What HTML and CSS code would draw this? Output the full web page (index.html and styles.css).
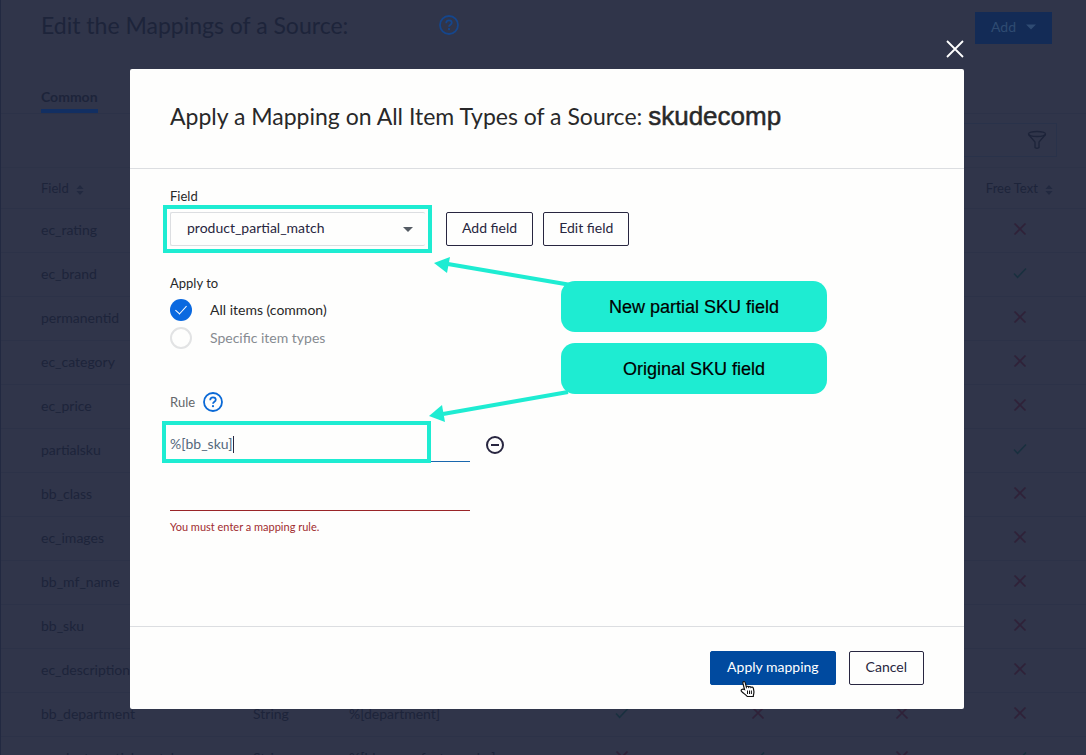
FILE: index.html
```html
<!DOCTYPE html>
<html lang="en">
<head>
<meta charset="utf-8">
<title>Edit the Mappings of a Source</title>
<link rel="stylesheet" href="styles.css">
</head>
<body>
<svg class="defs" aria-hidden="true">
  <symbol id="cross" viewBox="0 0 14 14"><path d="M1.500 1.500l11 11M12.500 1.500l-11 11" fill="none" stroke="currentColor" stroke-width="1.700"/></symbol>
  <symbol id="check" viewBox="0 0 14 14"><path d="M1 7.500l3.600 3.800L13 2.500" fill="none" stroke="currentColor" stroke-width="1.500"/></symbol>
  <symbol id="sort" viewBox="0 0 8 12"><path d="M4 1l3.500 4h-7zM4 11l3.500-4h-7z" fill="currentColor"/></symbol>
  <symbol id="help" viewBox="0 0 20 20"><circle cx="10" cy="10" r="9" fill="none" stroke="currentColor" stroke-width="1.800"/><path d="M7.200 8.200C7.200 6.300 8.400 5.300 10 5.300s2.800 1 2.800 2.500C12.800 9.800 10 9.800 10 11.800" fill="none" stroke="currentColor" stroke-width="1.700"/><circle cx="10" cy="14.200" r="1.100" fill="currentColor"/></symbol>
</svg>

<div class="page">
  <header class="page-header">
    <h1 class="page-title">Edit the Mappings of a Source:</h1>
    <button class="help page-help" type="button" aria-label="Help"><svg><use href="#help"/></svg></button>
    <button class="add" type="button">Add <svg viewBox="0 0 10 6"><path d="M0 .5h10L5 5.500z" fill="currentColor"/></svg></button>
  </header>
  <nav class="tabs"><a class="tab" href="#common">Common</a></nav>
  <div class="toolbar">
    <button class="filter" type="button" aria-label="Filter"><svg viewBox="0 0 20 20" fill="none" stroke="currentColor" stroke-width="1.300"><ellipse cx="10" cy="4" rx="8.500" ry="2.500"/><path d="M1.500 4.500L8 12v5.500q2 1.500 4 0V12l6.500-7.500"/></svg></button>
  </div>
  <table class="mappings">
    <colgroup><col class="c-field"><col class="c-type"><col class="c-rule"><col class="c-a"><col class="c-b"><col class="c-c"><col class="c-d"></colgroup>
    <thead><tr><th>Field <svg class="sort"><use href="#sort"/></svg></th><th></th><th></th><th></th><th></th><th></th><th class="mark-head">Free Text <svg class="sort"><use href="#sort"/></svg></th></tr></thead>
    <tbody>
      <tr><td>ec_rating</td><td></td><td></td><td></td><td></td><td></td><td class="mark"><svg class="no"><use href="#cross"/></svg></td></tr>
      <tr><td>ec_brand</td><td></td><td></td><td></td><td></td><td></td><td class="mark"><svg class="yes"><use href="#check"/></svg></td></tr>
      <tr><td>permanentid</td><td></td><td></td><td></td><td></td><td></td><td class="mark"><svg class="no"><use href="#cross"/></svg></td></tr>
      <tr><td>ec_category</td><td></td><td></td><td></td><td></td><td></td><td class="mark"><svg class="no"><use href="#cross"/></svg></td></tr>
      <tr><td>ec_price</td><td></td><td></td><td></td><td></td><td></td><td class="mark"><svg class="no"><use href="#cross"/></svg></td></tr>
      <tr><td>partialsku</td><td></td><td></td><td></td><td></td><td></td><td class="mark"><svg class="yes"><use href="#check"/></svg></td></tr>
      <tr><td>bb_class</td><td></td><td></td><td></td><td></td><td></td><td class="mark"><svg class="no"><use href="#cross"/></svg></td></tr>
      <tr><td>ec_images</td><td></td><td></td><td></td><td></td><td></td><td class="mark"><svg class="no"><use href="#cross"/></svg></td></tr>
      <tr><td>bb_mf_name</td><td></td><td></td><td></td><td></td><td></td><td class="mark"><svg class="no"><use href="#cross"/></svg></td></tr>
      <tr><td>bb_sku</td><td></td><td></td><td></td><td></td><td></td><td class="mark"><svg class="no"><use href="#cross"/></svg></td></tr>
      <tr><td>ec_description</td><td></td><td></td><td></td><td></td><td></td><td class="mark"><svg class="no"><use href="#cross"/></svg></td></tr>
      <tr><td>bb_department</td><td>String</td><td>%[department]</td><td class="mark"><svg class="yes"><use href="#check"/></svg></td><td class="mark"><svg class="no"><use href="#cross"/></svg></td><td class="mark mark-wide"><svg class="no"><use href="#cross"/></svg></td><td class="mark"><svg class="no"><use href="#cross"/></svg></td></tr>
      <tr><td>product_partial_match</td><td>String</td><td>%[bb_manufacture_sku]</td><td class="mark"><svg class="no"><use href="#cross"/></svg></td><td class="mark"><svg class="yes"><use href="#check"/></svg></td><td class="mark mark-wide"><svg class="no"><use href="#cross"/></svg></td><td class="mark"><svg class="yes"><use href="#check"/></svg></td></tr>
    </tbody>
  </table>
</div>

<div class="overlay">
  <div class="dialog" role="dialog" aria-labelledby="dialog-title">
    <button class="close" type="button" aria-label="Close"><svg viewBox="0 0 18 18"><path d="M1 1l16 16M17 1L1 17" stroke="currentColor" stroke-width="1.800" fill="none"/></svg></button>
    <header class="dialog-header">
      <h2 class="dialog-title" id="dialog-title">Apply a Mapping on All Item Types of a Source: <span class="source">skudecomp</span></h2>
    </header>
    <form class="dialog-body">
      <label class="label" for="field">Field</label>
      <div class="field-row">
        <div class="marked marked-select">
          <select class="select" id="field"><option>product_partial_match</option></select>
          <svg class="arrow arrow-top" viewBox="0 0 140 32"><path d="M137 29L14 8" stroke="currentColor" stroke-width="4"/><path d="M0 7L16 1l-3 16z" fill="currentColor"/></svg>
        </div>
        <button class="button" type="button">Add field</button>
        <button class="button" type="button">Edit field</button>
      </div>
      <fieldset class="apply-to">
        <legend class="label">Apply to</legend>
        <label class="option"><input class="radio" type="radio" name="scope" checked>All items (common)</label>
        <label class="option muted"><input class="radio" type="radio" name="scope">Specific item types</label>
      </fieldset>
      <div class="rule-head"><label class="rule-label" for="rule">Rule</label><button class="help" type="button" aria-label="Rule help"><svg><use href="#help"/></svg></button></div>
      <div class="rule-row">
        <div class="rule-box">
          <input class="rule" id="rule" type="text" value="%[bb_sku]">
          <span class="rule-mark"></span>
          <span class="caret"></span>
          <svg class="arrow arrow-bottom" viewBox="0 0 140 32"><path d="M139 2L14 24" stroke="currentColor" stroke-width="4"/><path d="M0 26L13 15l3 17z" fill="currentColor"/></svg>
        </div>
        <button class="remove" type="button" aria-label="Remove rule"><svg viewBox="0 0 20 20" fill="none" stroke="currentColor" stroke-width="2"><circle cx="10" cy="10" r="8"/><path d="M6 10h8"/></svg></button>
      </div>
      <input class="rule invalid" type="text" aria-label="Mapping rule" aria-describedby="rule-error">
      <p class="error" id="rule-error">You must enter a mapping rule.</p>
      <div class="notes">
        <p class="note">New partial SKU field</p>
        <p class="note">Original SKU field</p>
      </div>
    </form>
    <footer class="dialog-footer">
      <button class="button primary" type="button">Apply mapping
        <svg class="cursor" viewBox="0 0 16 18"><path d="M4.500 9.500L2.900 3.200c-.4-1.900 1.800-2.300 2.300-.6L6.400 7c.4-1 2-1 2.300.1.600-.9 2-.7 2.300.3.700-.6 2.200-.3 2.400 1l.5 3c.3 2-.6 3-.6 5.100H7.300C6 14.700 3.500 13.500 1.500 11.400.3 9.800 2.500 8.300 4.500 9.500z" fill="#fff" stroke="#111" stroke-width="1.200"/><path d="M7.500 10.500v3.500M9.500 10.500v3.500M11.400 10.500v3.500" stroke="#111"/></svg>
      </button>
      <button class="button" type="button">Cancel</button>
    </footer>
  </div>
</div>
</body>
</html>
```
FILE: styles.css
```css
* { box-sizing: border-box; }
body {
  margin: 0;
  height: 100vh;
  overflow: hidden;
  background: #30354a;
  color: #1d243a;
  font: 14px/20px Lato, "Noto Sans", sans-serif;
}
button, input, select { font: inherit; color: inherit; }
button { border: 0; padding: 0; background: none; }
svg { display: block; }
h1, h2, p { margin: 0; font-weight: 400; }
.defs { position: absolute; width: 0; height: 0; }

.page { border-left: 1px solid #222941; }
.page-header { display: flex; align-items: center; height: 56px; padding: 0 34px 0 40px; }
.page-title { font-size: 23px; line-height: 32px; padding-bottom: 6px; }
.help { color: #0a69d6; }
.help svg { width: 20px; height: 20px; }
.page-help { margin-left: 91px; padding-bottom: 6px; color: #15468c; }
.add {
  display: flex; align-items: center; gap: 10px;
  height: 32px; padding: 0 16px 2px; margin-left: auto;
  background: #132b56; color: #2f4b72;
}
.add svg { width: 10px; height: 6px; }
.tabs { display: flex; height: 58px; padding: 31px 40px 0; border-bottom: 1px solid #2c3248; }
.tab { color: inherit; font-weight: 700; text-decoration: none; border-bottom: 4px solid #122f62; }
.toolbar { display: flex; justify-content: flex-end; height: 53px; padding: 9px 29px; }
.filter { display: flex; align-items: center; justify-content: flex-end; width: 300px; height: 34px; padding-right: 9px; border: 1px solid #29324a; }
.filter svg { width: 20px; height: 20px; }

.mappings { width: 100%; table-layout: fixed; border-collapse: collapse; border-top: 1px solid #2d3348; }
.mappings tr { height: 44px; border-bottom: 1px solid #2c3248; }
.mappings thead tr { height: 41px; }
.mappings th, .mappings td { padding: 0 0 2px; text-align: left; font-weight: 400; white-space: nowrap; }
.mappings th { padding-bottom: 0; font-size: 13px; }
.mappings th:first-child, .mappings td:first-child { padding-left: 40px; }
.mappings .mark, .mappings .mark-head { text-align: center; }
.mappings .mark { padding-bottom: 6px; }
.mappings .mark-wide { padding-left: 26px; }
.mappings .mark svg { display: inline-block; vertical-align: middle; }
.mappings .sort { display: inline-block; width: 8px; height: 12px; margin-left: 4px; vertical-align: middle; color: #222940; }
.no, .yes { width: 14px; height: 14px; }
.no { color: #2f2138; }
.yes { color: #19303f; }
.c-field { width: 252px; }
.c-type { width: 96px; }
.c-rule { width: 204px; }
.c-a { width: 138px; }
.c-b { width: 134px; }
.c-c { width: 128px; }

.overlay { position: fixed; inset: 0; display: flex; justify-content: center; align-items: flex-start; padding: 69px 122px 0 130px; }
.dialog {
  position: relative; display: flex; flex-direction: column;
  width: 100%; min-height: 640px;
  background: #fefefd; color: #282829; border-radius: 2px;
}
.close { position: absolute; right: 0; top: -29px; color: #fff; }
.close svg { width: 18px; height: 18px; }
.dialog-header { padding: 31px 40px 36px; border-bottom: 1px solid #dcdee1; }
.dialog-title { font-size: 23px; line-height: 32px; }
.source { font-family: "Liberation Sans", Arial, sans-serif; font-size: 26px; -webkit-text-stroke: .5px #282829; }
.dialog-body { position: relative; flex: 1; padding: 17px 40px 0; }
.label { display: block; padding: 0; font-size: 13px; }
.field-row { display: flex; align-items: center; gap: 10px; height: 46px; margin-left: -7px; }
.marked { position: relative; width: 269px; height: 48px; margin-right: 4px; padding: 3px; border: 4px solid #1eecd2; }
.select {
  width: 100%; height: 34px; padding: 0 16px 2px;
  appearance: none; border: 1px solid #dcdee1; border-right: 0; border-radius: 2px;
  background: linear-gradient(#fefefd, #fefefd); color: #282640;
}
.marked-select::after {
  content: ""; position: absolute; right: 15px; top: 18px;
  border: 5px solid transparent; border-top-color: #555c64; border-bottom: 0;
}
.button {
  height: 34px; padding: 0 15px 2px;
  border: 1px solid #282640; border-radius: 2px; background: #fefefd; color: #282640;
}
.arrow { position: absolute; width: 140px; height: 32px; color: #1eecd2; }
.arrow-top { left: 267px; top: 47px; }
.arrow-bottom { left: 259px; top: -37px; }
.apply-to { margin: 21px 0 0; padding: 0; border: 0; }
.option { display: flex; align-items: center; gap: 18px; height: 28px; }
.apply-to .label { padding-bottom: 3px; }
.muted { color: #868b91; }
.radio { width: 22px; height: 22px; margin: 0; appearance: none; border: 2px solid #e2e3e4; border-radius: 50%; }
.radio:checked { position: relative; border: 0; background: #0a69e0; }
.radio:checked::after {
  content: ""; position: absolute; left: 8px; top: 4px; width: 5px; height: 10px;
  border: solid #fff; border-width: 0 1px 1px 0; rotate: 42deg;
}
.rule-head { display: flex; align-items: center; gap: 8px; height: 20px; margin-top: 40px; }
.rule-label { font-size: 13px; color: #64676b; }
.rule-row { display: flex; align-items: center; gap: 15px; margin-top: 15px; }
.rule-box { position: relative; width: 300px; }
.rule { display: block; width: 300px; height: 35px; padding: 0 0 2px; border: 0; border-bottom: 1px solid #1a67ae; background: none; color: #55697c; outline: 0; }
.rule-mark { position: absolute; left: -8px; top: -6px; width: 269px; height: 42px; border: 4px solid #1eecd2; }
.caret { position: absolute; left: 63px; top: 9px; width: 1px; height: 17px; background: #282640; }
.remove { color: #282640; }
.remove svg { width: 20px; height: 20px; }
.rule.invalid { margin-top: 14px; border-bottom-color: #9a2528; }
.error { padding-top: 6px; font-size: 11px; color: #a12c2f; }
.notes { position: absolute; left: 431px; top: 112px; display: grid; gap: 11px; }
.note {
  display: flex; align-items: center; justify-content: center;
  width: 266px; height: 51px; border-radius: 14px;
  background: #1eecd2; color: #000;
  font-family: "Liberation Sans", Arial, sans-serif; font-size: 18px; -webkit-text-stroke: .2px #000;
}
.dialog-footer { display: flex; justify-content: flex-end; gap: 13px; padding: 24px 40px; border-top: 1px solid #dcdee1; }
.dialog-footer .button { padding: 0 16px 2px; }
.primary { position: relative; border-color: #004a9f; background: #004a9f; color: #fff; }
.cursor { position: absolute; left: 29px; top: 28px; width: 16px; height: 18px; }
```
